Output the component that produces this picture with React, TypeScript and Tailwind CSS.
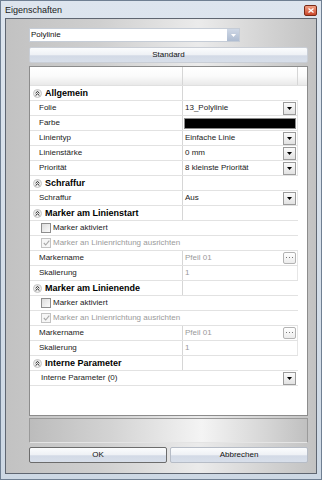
import React from "react"

type Row =
    | { kind: "cat"; label: string }
    | { kind: "prop"; label: string; value: string; control?: "drop" | "dots" | "color"; dim?: boolean }
    | { kind: "check"; label: string; checked?: boolean; disabled?: boolean }
    | { kind: "full"; label: string }

const rows: Row[] = [
    { kind: "cat", label: "Allgemein" },
    { kind: "prop", label: "Folie", value: "13_Polylinie", control: "drop" },
    { kind: "prop", label: "Farbe", value: "", control: "color" },
    { kind: "prop", label: "Linientyp", value: "Einfache Linie", control: "drop" },
    { kind: "prop", label: "Linienstärke", value: "0 mm", control: "drop" },
    { kind: "prop", label: "Priorität", value: "8 kleinste Priorität", control: "drop" },
    { kind: "cat", label: "Schraffur" },
    { kind: "prop", label: "Schraffur", value: "Aus", control: "drop" },
    { kind: "cat", label: "Marker am Linienstart" },
    { kind: "check", label: "Marker aktiviert" },
    { kind: "check", label: "Marker an Linienrichtung ausrichten", checked: true, disabled: true },
    { kind: "prop", label: "Markername", value: "Pfeil 01", control: "dots", dim: true },
    { kind: "prop", label: "Skalierung", value: "1", dim: true },
    { kind: "cat", label: "Marker am Linienende" },
    { kind: "check", label: "Marker aktiviert" },
    { kind: "check", label: "Marker an Linienrichtung ausrichten", checked: true, disabled: true },
    { kind: "prop", label: "Markername", value: "Pfeil 01", control: "dots", dim: true },
    { kind: "prop", label: "Skalierung", value: "1", dim: true },
    { kind: "cat", label: "Interne Parameter" },
    { kind: "full", label: "Interne Parameter (0)" },
]

function Collapse() {
    return <svg width="9" height="9" viewBox="0 0 9 9" className="shrink-0">
        <circle cx="4.5" cy="4.5" r="4" fill="#efefef" stroke="#c4c4c4" />
        <path d="M2.6 4.2 L4.5 2.4 L6.4 4.2 M2.6 6.6 L4.5 4.8 L6.4 6.6" stroke="#222" strokeWidth="1" fill="none" />
    </svg>
}

function DropButton() {
    return <div className="w-[13px] h-[13px] shrink-0 border border-[#9b9b9b] bg-gradient-to-b from-[#fbfbfb] to-[#e2e2e2] flex items-center justify-center">
        <svg width="5" height="3" viewBox="0 0 5 3"><polygon points="0,0 5,0 2.5,3" fill="#000" /></svg>
    </div>
}

function DotsButton() {
    return <div className="w-[13px] h-[12px] shrink-0 border border-[#b3b3b3] rounded-[2px] bg-gradient-to-b from-white to-[#ececec] flex items-center justify-center">
        <svg width="7" height="2" viewBox="0 0 7 2">
            <rect x="0" y="0" width="1" height="1" fill="#777" />
            <rect x="3" y="0" width="1" height="1" fill="#777" />
            <rect x="6" y="0" width="1" height="1" fill="#777" />
        </svg>
    </div>
}

function CheckBox({ checked, disabled }: { checked?: boolean; disabled?: boolean }) {
    return <div className={disabled
        ? "w-[10px] h-[10px] shrink-0 border border-[#c2c2c2] bg-[#f6f6f6] flex items-center justify-center"
        : "w-[10px] h-[10px] shrink-0 border border-[#8e8e8e] bg-gradient-to-br from-[#dcdcdc] to-[#fbfbfb]"}>
        {checked && <svg width="7" height="6" viewBox="0 0 7 6">
            <path d="M0.8 3 L2.7 5 L6.3 0.6" stroke="#a8a8a8" strokeWidth="1.1" fill="none" />
        </svg>}
    </div>
}

function GridRow({ row }: { row: Row }) {
    if (row.kind === "cat") {
        return <div className="flex h-[15px]">
            <div className="w-[268px] flex border-b border-[#e2e2e2]">
                <div className="w-[153px] flex items-center gap-[3px] pl-[3px] border-r border-[#d6d6d6] text-[9px] font-bold text-black">
                    <Collapse />
                    <span>{row.label}</span>
                </div>
                <div className="flex-1" />
            </div>
        </div>
    }
    if (row.kind === "check") {
        return <div className="flex h-[15px]">
            <div className="w-[268px] flex items-center gap-[2px] pl-[11px] border-b border-[#e2e2e2]">
                <CheckBox checked={row.checked} disabled={row.disabled} />
                <span className={row.disabled ? "text-[#9a9a9a]" : "text-[#222]"}>{row.label}</span>
            </div>
        </div>
    }
    if (row.kind === "full") {
        return <div className="flex h-[15px]">
            <div className="w-[268px] flex items-center pl-[11px] pr-[2px] border-b border-[#e2e2e2]">
                <span className="flex-1 text-[#222]">{row.label}</span>
                <DropButton />
            </div>
        </div>
    }
    return <div className="flex h-[15px]">
        <div className="w-[268px] flex border-b border-[#e2e2e2]">
            <div className="w-[153px] flex items-center pl-[9px] border-r border-[#d6d6d6] text-[#222]">{row.label}</div>
            <div className="flex-1 flex items-center pl-[1px] pr-[1px] border-r border-[#e6e6e6]">
                {row.control === "color"
                    ? <div className="flex-1 h-[11px] border border-[#8a8a8a] bg-black" />
                    : <span className={row.dim ? "flex-1 pl-[1px] text-[#9a9a9a]" : "flex-1 pl-[1px] text-[#222]"}>{row.value}</span>}
                {row.control === "drop" && <DropButton />}
                {row.control === "dots" && <DotsButton />}
            </div>
        </div>
    </div>
}

function App() {
    return <div className="w-[322px] h-[480px] border border-[#6f7f92] bg-gradient-to-b from-[#dde5ee] to-[#cdd8e4] flex flex-col font-['Liberation_Sans',Arial,sans-serif] text-[8px] leading-none select-none">
        <div className="h-[17px] flex items-center justify-between pl-[4px] pr-[4px]">
            <span className="text-[9px] text-[#1b1b1b] pt-[1px]">Eigenschaften</span>
            <div className="w-[13px] h-[11px] mt-[2px] border border-[#7a2b18] rounded-[2px] bg-gradient-to-b from-[#f0a084] to-[#c9452a] flex items-center justify-center">
                <svg width="6" height="5" viewBox="0 0 6 5"><path d="M0.5 0.5 L5.5 4.5 M5.5 0.5 L0.5 4.5" stroke="#fff" strokeWidth="1.3" /></svg>
            </div>
        </div>

        <div className="ml-[4px] w-[312px] h-[456px] border border-[#5f6671] bg-[linear-gradient(to_right,#c2c2c2_0%,#cfcfcf_30%,#ebebeb_62%,#d2d2d2_85%,#c2c2c2_100%)] flex flex-col pl-[23px]">
            <div className="mt-[9px] w-[211px] h-[14px] flex bg-white border border-[#c5ccd6]">
                <span className="flex-1 flex items-center pl-[1px] text-[#111]">Polylinie</span>
                <div className="w-[12px] bg-gradient-to-b from-[#cfd8e6] to-[#aebcd1] flex items-center justify-center">
                    <svg width="5" height="3" viewBox="0 0 5 3"><polygon points="0,0 5,0 2.5,3" fill="#fff" /></svg>
                </div>
            </div>

            <div className="mt-[5px] w-[279px] h-[16px] border border-[#c9ced6] rounded-[2px] bg-[linear-gradient(to_bottom,#fbfcfd_0%,#eef1f5_50%,#d3dae6_55%,#d8dfea_100%)] flex items-center justify-center text-[#111]">
                Standard
            </div>

            <div className="mt-[3px] w-[279px] h-[350px] border border-[#8c8c8c] bg-white flex flex-col">
                <div className="h-[19px] flex bg-gradient-to-b from-white via-[#fbfbfb] to-[#e9e9e9] border-b border-[#e0e0e0]">
                    <div className="w-[153px] border-r border-[#d6d6d6]" />
                    <div className="w-[115px] border-r border-[#d6d6d6]" />
                    <div className="flex-1" />
                </div>
                {rows.map((row, i) => <GridRow key={i} row={row} />)}
            </div>

            <div className="mt-[2px] w-[279px] h-[25px] border border-[#9a9a9a] border-b-[#e4e4e4] bg-[linear-gradient(to_right,#bcbcbc_0%,#d4d4d4_30%,#f4f4f4_62%,#d6d6d6_85%,#c0c0c0_100%)]" />

            <div className="mt-[4px] w-[279px] flex gap-[3px]">
                <div className="w-[138px] h-[16px] border border-[#6c6c6c] rounded-[2px] bg-[linear-gradient(to_bottom,#fbfcfd_0%,#eef1f5_50%,#d3dae6_55%,#d8dfea_100%)] flex items-center justify-center text-[#111]">
                    OK
                </div>
                <div className="w-[138px] h-[16px] border border-[#b6bcc6] rounded-[2px] bg-[linear-gradient(to_bottom,#fbfcfd_0%,#eef1f5_50%,#d3dae6_55%,#d8dfea_100%)] flex items-center justify-center text-[#111]">
                    Abbrechen
                </div>
            </div>
        </div>
    </div>
}

export default App
